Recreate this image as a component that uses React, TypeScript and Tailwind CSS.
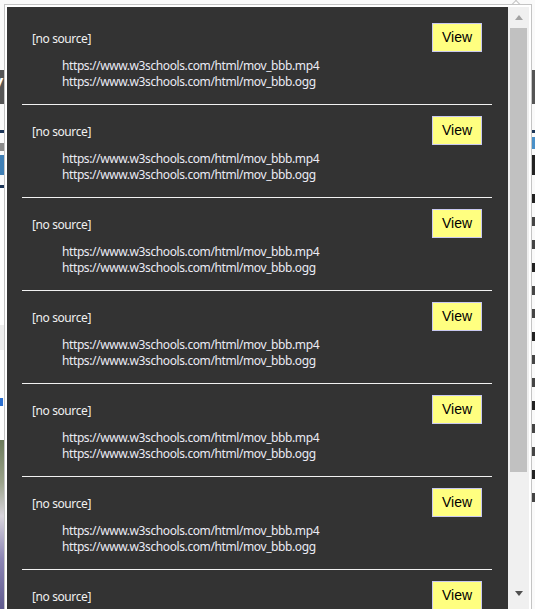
const SOURCES = [
  "https://www.w3schools.com/html/mov_bbb.mp4",
  "https://www.w3schools.com/html/mov_bbb.ogg",
];

const ROWS = Array.from({ length: 8 }, (_, i) => ({ id: i, title: "[no source]", urls: SOURCES }));

function BackgroundPage() {
  return (
    <div className="absolute inset-0 flex flex-col bg-[#fafafa]">
      <div className="h-[70px]" />
      <div className="h-[34px] bg-[#555555] flex items-center justify-between">
        <span className="text-[26px] text-white font-['Liberation_Sans',sans-serif] -ml-[14px]">V</span>
      </div>
      <div className="h-[26px]" />
      <div className="h-[3px] bg-[#1c3557]" />
      <div className="h-[22px] flex justify-between">
        <div className="w-[6px] h-[8px] mt-[10px] bg-[#8a8a8a]" />
        <div className="w-[4px] h-[12px] mt-[4px] bg-[#4a90c8]" />
      </div>
      <div className="h-[20px] flex justify-between">
        <div className="w-[6px] bg-[#3f7fb5]" />
        <div className="w-[4px] bg-[#222]" />
      </div>
      <div className="h-[10px]" />
      <div className="h-[3px] bg-[#1c3557] w-[8px]" />
      <div className="flex-1 flex justify-between">
        <div className="flex flex-col w-[8px]">
          <div className="h-[137px] bg-white" />
          <div className="h-[25px] bg-[#eeeeee]" />
          <div className="h-[48px] bg-white" />
          <div className="h-[8px] w-[3px] bg-[#2a6fd0]" />
          <div className="h-[34px] bg-white" />
          <div className="flex-1 bg-[linear-gradient(180deg,#6b7a5a_0%,#9aa28a_25%,#d8d4dc_45%,#8d86b5_70%,#5f5a8e_100%)]" />
        </div>
        <div className="flex flex-col w-[4px] gap-[14px] pt-[6px]">
          {Array.from({ length: 14 }, (_, i) => (
            <div key={i} className={`h-[9px] ${i % 3 === 0 ? "bg-[#222]" : "bg-[#444]"}`} />
          ))}
        </div>
      </div>
    </div>
  );
}

function Scrollbar() {
  return (
    <div className="w-[21px] h-full flex flex-col bg-[#f0f0f0]">
      <div className="h-[21px] flex items-center justify-center">
        <div className="w-0 h-0 border-l-[4.5px] border-r-[4.5px] border-b-[5px] border-l-transparent border-r-transparent border-b-[#a3a3a3]" />
      </div>
      <div className="flex-1 px-[2px]">
        <div className="h-[444px] bg-[#c1c1c1]" />
      </div>
      <div className="h-[21px] flex items-center justify-center">
        <div className="w-0 h-0 border-l-[4.5px] border-r-[4.5px] border-t-[5px] border-l-transparent border-r-transparent border-t-[#505050]" />
      </div>
      <div className="h-[5px]" />
    </div>
  );
}

export default function App() {
  return (
    <div className="relative w-[535px] h-[609px] overflow-hidden font-['Noto_Sans',sans-serif]">
      <BackgroundPage />

      {/* popup notch */}
      <div className="absolute left-[513px] top-[1px] w-[6px] h-[6px] rotate-45 bg-white border-l border-t border-[#c4c4c4]" />

      <div className="absolute left-[4px] top-[4px] w-[528px] h-[608px] border border-[#c4c4c4] bg-white p-[2px] flex">
        <div className="flex-1 bg-[#333333] overflow-hidden">
          <div className="pt-[5px] px-[15px] pr-[16px]">
            {ROWS.map((row) => (
              <div key={row.id} className="border-b border-[#f2f2f2] px-[10px] pt-[11px] pb-[14px]">
                <div className="flex items-center justify-between">
                  <span className="mt-[2px] text-[12px] text-[#f0f0f0] leading-[16px] tracking-[-0.4px]">{row.title}</span>
                  <button className="w-[50px] h-[29px] bg-[#ffff80] border border-[#c8c8f0] text-black text-[14px] font-['Liberation_Sans',sans-serif]">
                    View
                  </button>
                </div>
                <div className="pl-[30px] pt-[6px] flex flex-col">
                  {row.urls.map((u) => (
                    <span key={u} className="text-[12px] leading-[16px] text-[#ebebf5] tracking-[-0.4px]">
                      {u}
                    </span>
                  ))}
                </div>
              </div>
            ))}
          </div>
        </div>
        <Scrollbar />
      </div>
    </div>
  );
}
